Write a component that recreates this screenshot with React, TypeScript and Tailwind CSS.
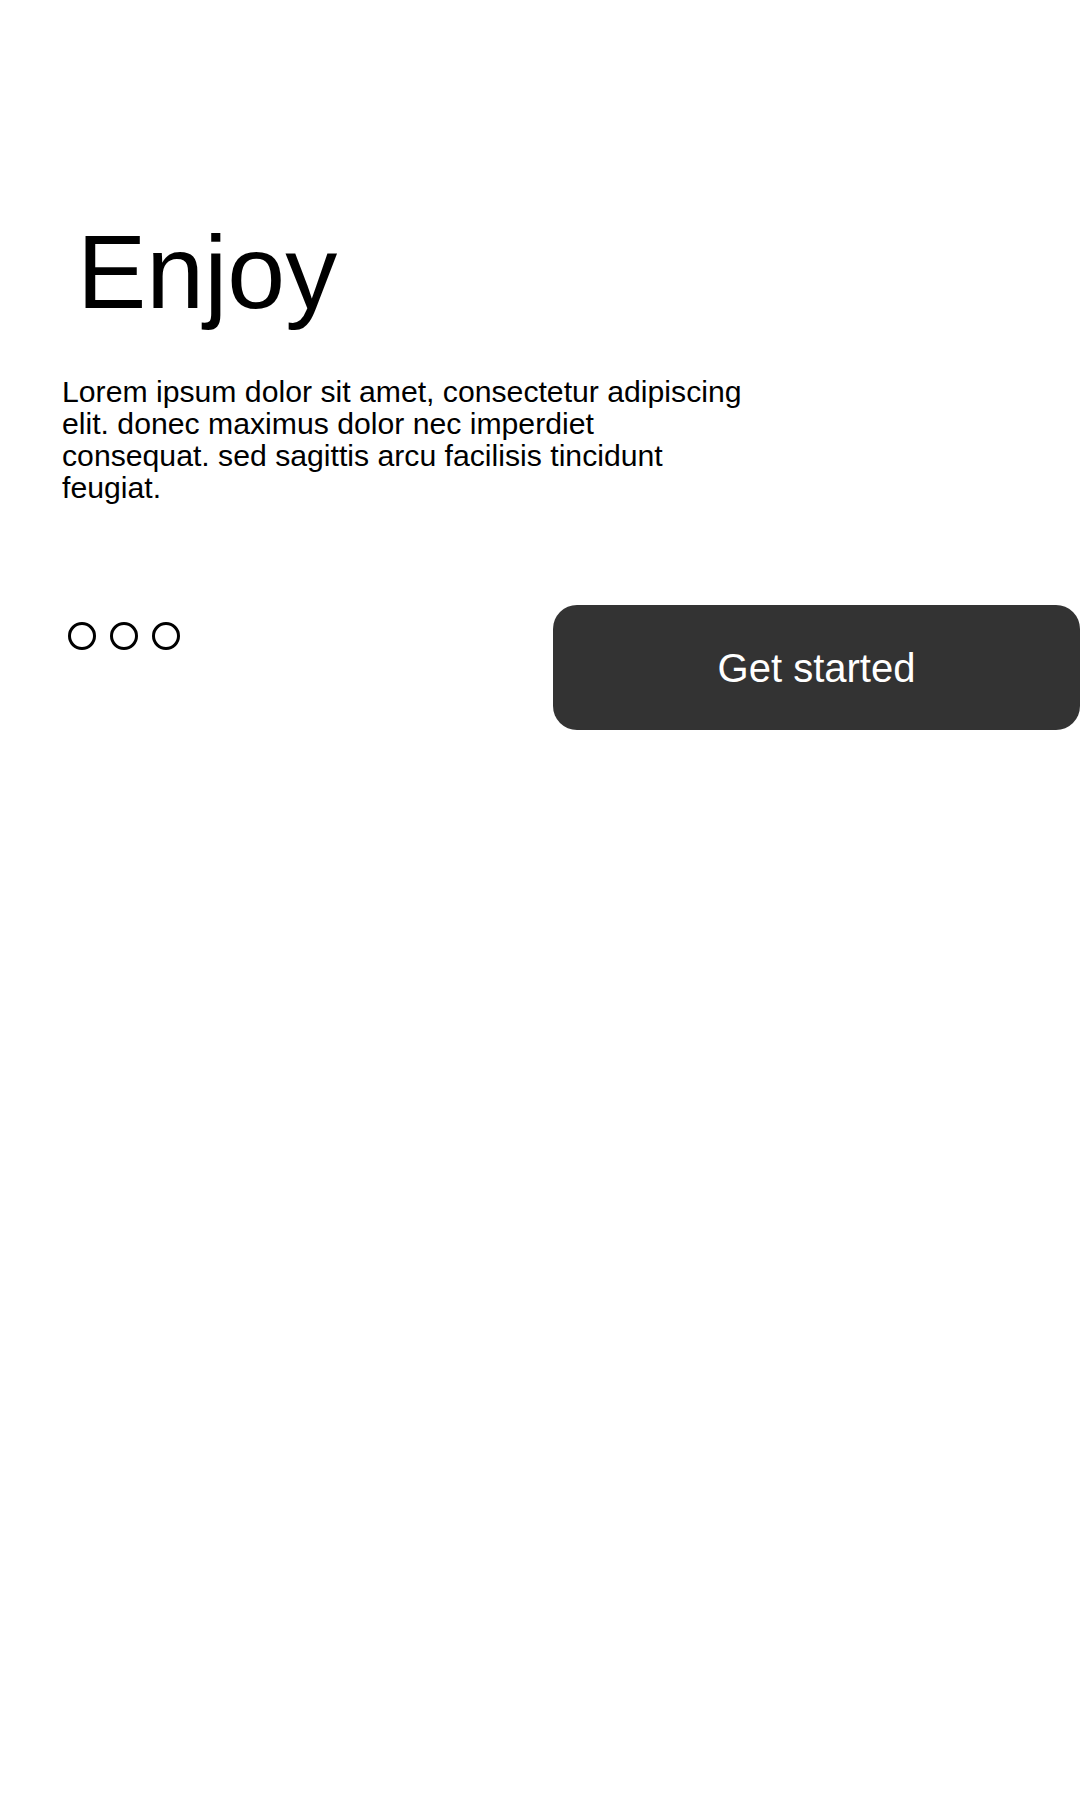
import React from "react";

export default function App() {
  return (
    <div className="w-full h-[1800px] bg-white font-['Liberation_Sans',Arial,sans-serif] text-black">
      <div className="flex flex-col pl-[62px] pt-[220px]">
        <h1 className="ml-[15px] text-[104px] leading-[104px] font-normal">Enjoy</h1>
        <p className="mt-[52px] w-[684px] text-[30.2px] leading-[32px]">
          Lorem ipsum dolor sit amet, consectetur adipiscing elit. donec maximus dolor nec imperdiet consequat. sed sagittis arcu facilisis tincidunt feugiat.
        </p>
        <div className="mt-[101px] flex items-start justify-between">
          <div className="ml-[6px] mt-[17px] flex gap-[14px]">
            <span className="block w-[28px] h-[28px] rounded-full border-[3px] border-black" />
            <span className="block w-[28px] h-[28px] rounded-full border-[3px] border-black" />
            <span className="block w-[28px] h-[28px] rounded-full border-[3px] border-black" />
          </div>
          <button className="w-[527px] h-[125px] rounded-[24px] bg-[#333333] text-white text-[40px] leading-none flex items-center justify-center">
            Get started
          </button>
        </div>
      </div>
    </div>
  );
}
